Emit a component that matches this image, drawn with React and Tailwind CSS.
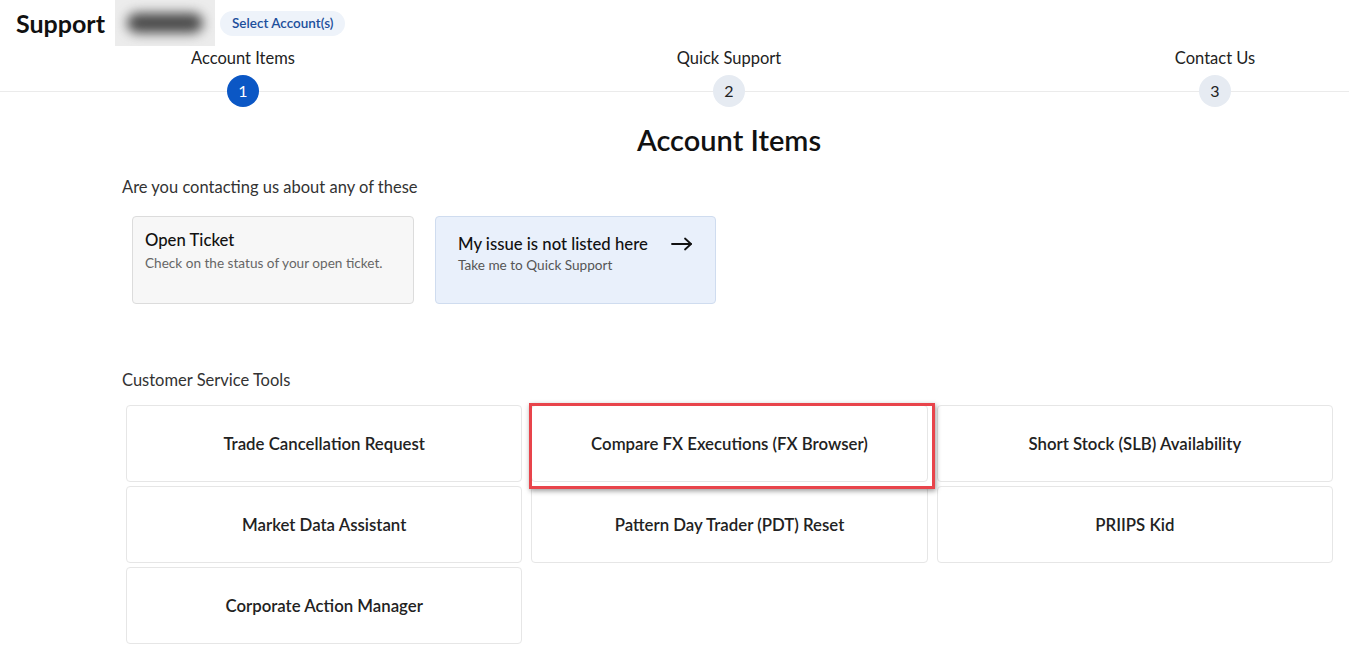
import React from 'react';

const steps = [
  { n: 1, label: 'Account Items', active: true },
  { n: 2, label: 'Quick Support' },
  { n: 3, label: 'Contact Us' }
];

const tools = [
  'Trade Cancellation Request',
  'Compare FX Executions (FX Browser)',
  'Short Stock (SLB) Availability',
  'Market Data Assistant',
  'Pattern Day Trader (PDT) Reset',
  'PRIIPS Kid',
  'Corporate Action Manager'
];

function ArrowRight() {
  return (
    <svg width="22" height="14" viewBox="0 0 22 14" fill="none" stroke="#111" strokeWidth="1.8" strokeLinecap="round" strokeLinejoin="round">
      <path d="M1 7h19" />
      <path d="M14 1.5 20 7l-6 5.5" />
    </svg>
  );
}

export default function App() {
  return (
    <div className="h-[658px] w-full overflow-hidden bg-white text-[#222]" style={{ fontFamily: 'Lato, "Open Sans", Arial, sans-serif' }}>
      <div className="w-[1458px]">
        <header className="flex h-[46px] items-center pl-4">
          <span className="text-[25px] font-bold leading-none text-[#111]">Support</span>
          <div className="ml-[10px] flex h-[46px] w-[100px] items-center justify-center overflow-hidden bg-[#ececec]">
            <div className="h-[20px] w-[76px] rounded-full bg-[#4a4a4a] blur-[6px]" />
          </div>
          <button type="button" className="ml-[5px] h-[25px] rounded-full bg-[#eef3fa] px-[12px] text-[13.5px] font-semibold text-[#1d4f9c]">
            Select Account(s)
          </button>
        </header>

        <div className="grid grid-cols-3 border-b border-[#ebebeb] pt-[2px]">
          {steps.map((s) => (
            <div key={s.n} className="flex flex-col items-center">
              <span className="h-[20px] text-[16.5px] leading-[20px] text-[#222]">{s.label}</span>
              <span
                className={
                  s.active
                    ? 'relative mt-[7px] -mb-[16px] flex h-[32px] w-[32px] items-center justify-center rounded-full bg-[#0b57c5] text-[16px] text-white'
                    : 'relative mt-[7px] -mb-[16px] flex h-[32px] w-[32px] items-center justify-center rounded-full bg-[#e6ebf2] text-[16px] text-[#222]'
                }
              >
                {s.n}
              </span>
            </div>
          ))}
        </div>

        <main className="px-[122px]">
          <h1 className="mt-[30px] text-center text-[29px] font-semibold leading-[36px] text-[#111]">Account Items</h1>

          <p className="mt-[19px] text-[16.5px] leading-[20px] text-[#333]">Are you contacting us about any of these</p>

          <div className="ml-[10px] mt-[19px] flex gap-[21px]">
            <div className="h-[88px] w-[282px] rounded-[4px] border border-[#dcdcdc] bg-[#f7f7f7] px-[12px] pt-[13px]">
              <div className="text-[16.7px] font-medium leading-[20px] text-[#111]">Open Ticket</div>
              <div className="mt-[4px] text-[13.6px] leading-[18px] text-[#666]">Check on the status of your open ticket.</div>
            </div>
            <div className="h-[88px] w-[281px] rounded-[4px] border border-[#cfdcef] bg-[#e9f0fb] px-[22px] pt-[17px]">
              <div className="flex items-center justify-between">
                <span className="text-[16.7px] font-medium leading-[20px] text-[#111]">My issue is not listed here</span>
                <ArrowRight />
              </div>
              <div className="mt-[2px] text-[13.6px] leading-[18px] text-[#555]">Take me to Quick Support</div>
            </div>
          </div>

          <p className="mt-[66px] text-[16.5px] leading-[20px] text-[#333]">Customer Service Tools</p>

          <div className="ml-[4px] mt-[15px] grid w-[1207px] grid-cols-3 gap-x-[9px] gap-y-[4px]">
            {tools.map((t, i) => (
              <div key={t} className="relative flex h-[77px] items-center justify-center rounded-[4px] border border-[#e6e6e6] bg-white text-[16.8px] font-semibold text-[#222]">
                {t}
                {i === 1 && (
                  <div className="pointer-events-none absolute -left-[3px] -top-[3px] z-10 h-[86px] w-[406px] border-[3px] border-[#e8444b] shadow-[1px_2px_5px_rgba(0,0,0,0.4)]" />
                )}
              </div>
            ))}
          </div>
        </main>
      </div>
    </div>
  );
}
